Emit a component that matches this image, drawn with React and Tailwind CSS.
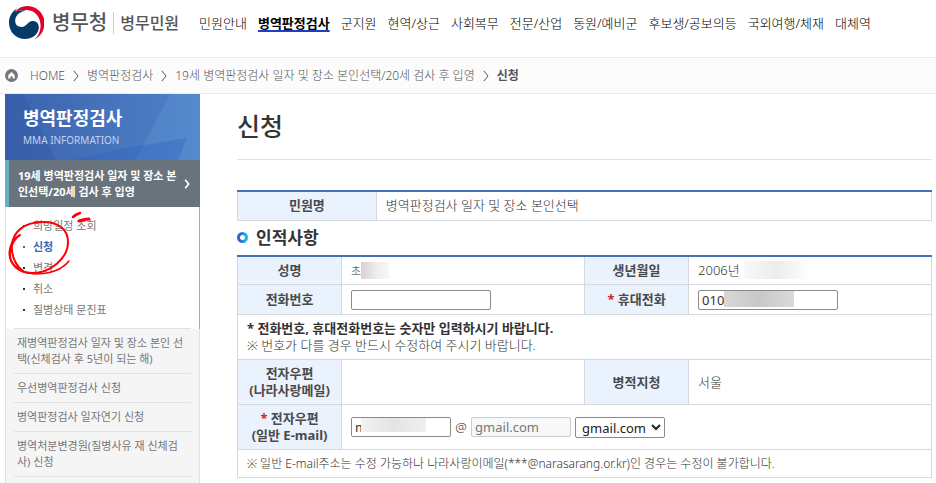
import { useState } from 'react';

const menus = ['민원안내', '병역판정검사', '군지원', '현역/상근', '사회복무', '전문/산업', '동원/예비군', '후보생/공보의등', '국외여행/체재', '대체역'];

const crumbs = ['HOME', '병역판정검사', '19세 병역판정검사 일자 및 장소 본인선택/20세 검사 후 입영', '신청'];

const subMenus = ['희망일정 조회', '신청', '변경', '취소', '질병상태 문진표'];

const sideMenus = [
  '재병역판정검사 일자 및 장소 본인 선택(신체검사 후 5년이 되는 해)',
  '우선병역판정검사 신청',
  '병역판정검사 일자연기 신청',
  '병역처분변경원(질병사유 재 신체검사) 신청',
];

const th = 'border border-[#d6d8dc] bg-[#eaf2fe] font-bold text-[#4a4a4a] text-center';
const td = 'border border-[#d6d8dc] px-[9px] font-light text-[#333]';
const box = 'h-5 rounded-xs border border-[#8a8a8a] bg-white px-[3px] font-normal text-[#333] outline-none';

const Required = () => <span className="text-[#d8232a]">* </span>;

const Emblem = () => (
  <svg className="size-9" viewBox="0 0 36 36" aria-hidden="true">
    <path fill="#e4002b" d="M7 7C10 3 14 1 19 1c10 0 17.500 7.500 17.500 17 0 7-3.500 13-10 16.500 4.500-4.500 6.500-9.500 6-15C32 11.500 27 5.500 19 5c-4.500-.3-8.500.5-12 2z" />
    <path fill="#063a67" d="M9 3.500C4 6.500 1 11.500 1 17.500 1 27 8 34 17 34c8 0 13.800-5.500 13.800-11.500 0-4.500-2.800-6.500-6.300-6.500-5 0-5.500 6-11 6-4 0-6.500-2.800-6.300-6.500C7.500 10 12 6.500 18 5.500 12.500 5 9.500 6 7 7z" />
  </svg>
);

const HomeIcon = () => (
  <svg className="size-[13px]" viewBox="0 0 13 13" aria-hidden="true">
    <circle cx="6.500" cy="6.500" r="6.500" fill="#777" />
    <path d="M6.500 3 3.300 6v3.600h2V7.500h2.400v2.100h2V6z" fill="#fff" />
  </svg>
);

const Chevron = ({ className }) => (
  <svg className={className} viewBox="0 0 6 12" fill="none" stroke="currentColor" aria-hidden="true">
    <path d="M.8.8 5 6 .8 11.200" />
  </svg>
);

// hand drawn marker around the current sub menu
const Marker = () => (
  <svg className="pointer-events-none absolute top-0 left-0 h-[72px] w-[90px]" viewBox="0 0 90 72" fill="none" stroke="#fb0007" strokeLinecap="round" aria-hidden="true">
    <path strokeWidth="2" d="M14 28C10 30 5 37 4 45c-1 12 8 21 22 21 19 0 36-15 36-31 0-13-10-20-25-20C18 15 7 25 6 38c-1 11 4 21 11 26" />
    <path strokeWidth="1.600" d="M9 31C3 38 2 48 5 54c5 9 13 12 23 13 13 0 27-3 35-13" />
    <path strokeWidth="2.500" d="M67 10c2-2 4-3 7-4" />
    <path strokeWidth="3" d="M73 14c3-1 6-2 10-2" />
  </svg>
);

const Sidebar = () => (
  <aside className="w-[195px] shrink-0 bg-[#f5f5f5] text-[11px]">
    <div className="relative h-[66px] bg-linear-to-r from-[#3b62ad] to-[#4f83c9]">
      <svg className="absolute inset-0 size-full" viewBox="0 0 195 66" preserveAspectRatio="none" aria-hidden="true">
        <path d="M0 0h18l33 66H0z" fill="#3358a0" opacity=".35" />
        <path d="M165 0h30v66h-64z" fill="#6ba0dc" opacity=".25" />
        <path d="M68 66l42-10 72-12-9 22z" fill="#2c60c0" opacity=".35" />
      </svg>
      <div className="relative px-[18px] pt-3 text-white">
        <h2 className="text-[18px] leading-6 font-bold">병역판정검사</h2>
        <p className="text-[10px] leading-5 text-[#c3d3ee]">MMA INFORMATION</p>
      </div>
    </div>
    <a href="#current" className="flex h-[47px] items-center border-l-4 border-[#69adc6] bg-[#68737b] pr-[10px] pl-[9px] leading-4 font-bold text-white">
      <span className="flex-1 whitespace-nowrap">19세 병역판정검사 일자 및 장소 본<br />인선택/20세 검사 후 입영</span>
      <Chevron className="h-[10px] w-[6px] stroke-2" />
    </a>
    <div className="relative border-r border-l border-l-[#e2e2e2] border-r-[#aaa] bg-white px-2 pt-2">
      <ul className="border-b border-[#e2e2e2] pb-2">
        {subMenus.map((name) => (
          <li key={name} className="h-[21px] pl-[9px] leading-[21px]">
            <a href="#sub" className={name === '신청' ? 'flex items-center gap-2 font-bold text-[#3a66bb]' : 'flex items-center gap-2 text-[#777]'}>
              <span className={name === '신청' ? 'size-[2px] bg-[#3a66bb]' : 'size-[2px] bg-[#333]'} />
              {name}
            </a>
          </li>
        ))}
      </ul>
      <Marker />
    </div>
    <ul className="border-r border-l border-[#e2e2e2] px-2 pb-2">
      {sideMenus.map((name) => (
        <li key={name} className="border-b border-[#e2e2e2] px-[3px] py-[6px] leading-4">
          <a href="#side" className="block break-all text-[#777]">{name}</a>
        </li>
      ))}
    </ul>
  </aside>
);

const App = () => {
  const [phone, setPhone] = useState('');
  const [mobile, setMobile] = useState('010');
  const [mailId, setMailId] = useState('m');

  return (
    <div className="min-h-screen overflow-hidden bg-white font-['Noto_Sans','Noto_Sans_CJK_KR',sans-serif] text-[13px]">
      <header className="flex h-[58px] items-start border-b border-[#ececec] pt-[5px] pl-2">
        <a href="#home" className="flex items-center text-[#555]">
          <Emblem />
          <span className="ml-2 text-[20px] leading-9 font-medium">병무청</span>
          <span className="mx-[6px] h-[22px] w-px bg-[#ccc]" />
          <span className="text-[16px] leading-9 font-medium">병무민원</span>
        </a>
        <nav className="ml-5 flex gap-[11px] leading-9 font-light whitespace-nowrap text-black">
          {menus.map((menu) => (
            <a key={menu} href="#menu" className={menu === '병역판정검사' ? 'font-bold underline decoration-[#1d3fc4] decoration-2 underline-offset-2' : ''}>
              {menu}
            </a>
          ))}
        </nav>
      </header>

      <nav className="flex h-9 items-center border-b border-[#ececec] bg-[#fcfcfc] pl-[5px] text-[12px] text-[#555]">
        <HomeIcon />
        <ol className="ml-3 flex font-light whitespace-nowrap">
          {crumbs.map((crumb, i) => (
            <li key={crumb} className="flex items-center">
              {i > 0 && <Chevron className="mx-2 h-3 w-[6px]" />}
              <a href="#crumb" className={i === crumbs.length - 1 ? 'font-bold' : ''}>{crumb}</a>
            </li>
          ))}
        </ol>
      </nav>

      <div className="flex pl-[5px]">
        <Sidebar />
        <main className="ml-[37px] min-w-0 flex-1 pr-1">
          <h1 className="h-[66px] border-b border-[#e2e2e2] pt-3 text-[25px] leading-10 font-medium text-[#333]">신청</h1>

          <table className="mt-[30px] w-full table-fixed border-collapse border-t-2 border-t-[#4570b8]">
            <tbody>
              <tr className="h-[29px]">
                <th scope="row" className={`w-1/5 ${th}`}>민원명</th>
                <td className={td}>병역판정검사 일자 및 장소 본인선택</td>
              </tr>
            </tbody>
          </table>

          <h2 className="flex h-[34px] items-center gap-2 text-[17px] font-bold text-[#333]">
            <svg className="size-[11px]" viewBox="0 0 11 11" fill="none" strokeWidth="3" aria-hidden="true">
              <defs>
                <linearGradient id="ring">
                  <stop offset=".2" stopColor="#3c62c4" />
                  <stop offset="1" stopColor="#12baf5" />
                </linearGradient>
              </defs>
              <circle cx="5.500" cy="5.500" r="4" stroke="url(#ring)" />
            </svg>
            인적사항
          </h2>

          <table className="w-full table-fixed border-collapse border-t-2 border-t-[#4570b8] leading-[17px]">
            <colgroup>
              <col className="w-[15%]" />
              <col className="w-[35%]" />
              <col className="w-[15%]" />
              <col className="w-[35%]" />
            </colgroup>
            <tbody>
              <tr className="h-[29px]">
                <th scope="row" className={th}>성명</th>
                <td className={td}>
                  <div className="flex items-center">
                    <span className="text-[11px]">초</span>
                    <span className="h-[17px] w-7 bg-linear-to-r from-[#dccfce] via-[#ebebeb] to-[#f8f8f8]" />
                  </div>
                </td>
                <th scope="row" className={th}>생년월일</th>
                <td className={td}>
                  <div className="flex items-center gap-1">
                    2006년
                    <span className="h-[18px] w-[66px] bg-linear-to-r from-[#f8f8f8] via-[#ececec] to-white" />
                  </div>
                </td>
              </tr>
              <tr className="h-[30px]">
                <th scope="row" className={th}><label htmlFor="phone">전화번호</label></th>
                <td className={td}>
                  <input id="phone" className={`block w-[140px] ${box}`} value={phone} onChange={(e) => setPhone(e.target.value)} />
                </td>
                <th scope="row" className={th}><Required /><label htmlFor="mobile">휴대전화</label></th>
                <td className={td}>
                  <div className="relative">
                    <input id="mobile" className={`block w-[140px] ${box}`} value={mobile} onChange={(e) => setMobile(e.target.value)} />
                    <span className="absolute top-px left-[26px] h-4 w-[70px] bg-linear-to-r from-[#d8d8d8] via-[#c8c8c8] to-[#dadada]" />
                  </div>
                </td>
              </tr>
              <tr className="h-[45px]">
                <td colSpan="4" className={td}>
                  <p className="font-bold">* 전화번호, 휴대전화번호는 숫자만 입력하시기 바랍니다.</p>
                  <p>※ 번호가 다를 경우 반드시 수정하여 주시기 바랍니다.</p>
                </td>
              </tr>
              <tr className="h-[45px]">
                <th scope="row" className={th}>전자우편<br />(나라사랑메일)</th>
                <td className={td} />
                <th scope="row" className={th}>병적지청</th>
                <td className={td}>서울</td>
              </tr>
              <tr className="h-[45px]">
                <th scope="row" className={th}><Required /><label htmlFor="mail">전자우편<br />(일반 E-mail)</label></th>
                <td colSpan="3" className={td}>
                  <div className="flex items-center gap-1">
                    <div className="relative">
                      <input id="mail" className={`block w-[100px] ${box}`} value={mailId} onChange={(e) => setMailId(e.target.value)} />
                      <span className="absolute top-px left-[10px] h-[14px] w-[65px] bg-linear-to-r from-[#f2f2f2] via-[#e4e4e4] to-[#efefef]" />
                    </div>
                    <span className="w-3 text-center leading-5">@</span>
                    <input aria-label="메일 도메인" className="h-5 w-[100px] rounded-xs border border-[#ccc] bg-[#f8f8f8] px-[3px] font-normal text-[#777]" value="gmail.com" disabled readOnly />
                    <select aria-label="메일 도메인 선택" className="h-[21px] w-[90px] rounded-xs border border-[#8a8a8a] bg-white pl-[2px] font-normal text-[#222]">
                      <option>gmail.com</option>
                    </select>
                  </div>
                </td>
              </tr>
              <tr className="h-7">
                <td colSpan="4" className={`text-[12px] ${td}`}>※ 일반 E-mail주소는 수정 가능하나 나라사랑이메일(***@narasarang.or.kr)인 경우는 수정이 불가합니다.</td>
              </tr>
            </tbody>
          </table>
        </main>
      </div>
    </div>
  );
};

export default App;
